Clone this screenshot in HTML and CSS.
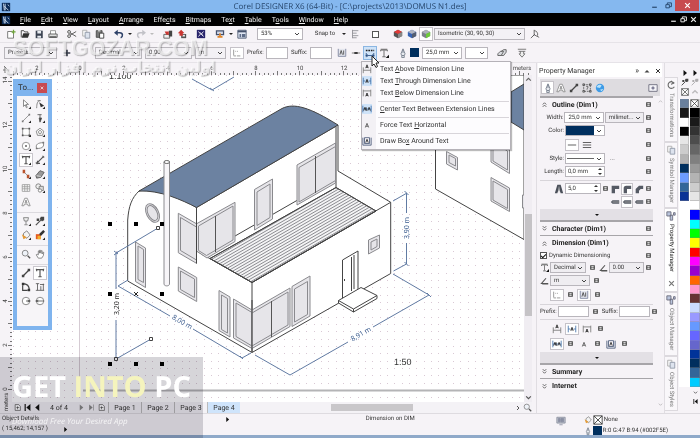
FILE: index.html
```html
<!DOCTYPE html>
<html lang="en">
<head>
<meta charset="utf-8">
<title>Corel DESIGNER X6</title>
<link rel="stylesheet" href="styles.css">
</head>
<body>
<svg class="defs" aria-hidden="true">
  <defs>
    <symbol id="logo" viewBox="0 0 12 12"><path d="M1 1h10v10H1z" fill="#0c2c58"/><path d="M3 2l1 8M5 2v8M4 5l5 5M8 3l2 2" stroke="#dce9fa" fill="none"/></symbol>
    <symbol id="new" viewBox="0 0 12 12"><path d="M2 3h5l2 2v6H2z" fill="#fff" stroke="#666"/><path d="M9 1v5M6.500 3.500h5" stroke="#6fa53a" stroke-width="1.500"/></symbol>
    <symbol id="open" viewBox="0 0 12 12"><path d="M1.500 10V2h3l1 1.500h4V5" fill="none" stroke="#333"/><path d="M2 10.500L4 5h7.500L9.500 10.500z" fill="#333"/></symbol>
    <symbol id="save" viewBox="0 0 12 12"><path d="M2 2h8.500v9H2z" fill="#3b4252"/><path d="M4 2.500h4.500v3H4zM4 8h4.500v2.500H4z" fill="#e9ecf2"/></symbol>
    <symbol id="print" viewBox="0 0 12 12"><path d="M3 6V2h6v4" fill="#fff" stroke="#888"/><path d="M1 6h10v4H1z" fill="#ddd" stroke="#555"/><path d="M2 9.500h8" stroke="#222"/></symbol>
    <symbol id="cut" viewBox="0 0 12 12"><path d="M1 3l10 6M1 9l10-6" stroke="#444"/><circle cx="2.500" cy="3.500" r="1.700" fill="#eee" stroke="#444"/><circle cx="2.500" cy="8.500" r="1.700" fill="#eee" stroke="#444"/></symbol>
    <symbol id="copy" viewBox="0 0 12 12"><path d="M2 1.500h5v7H2z" fill="#f5f5f5" stroke="#aaa"/><path d="M5 4h5.500v7H5z" fill="#dde3ee" stroke="#8c94a4"/></symbol>
    <symbol id="paste" viewBox="0 0 12 12"><path d="M1.500 2h7v8h-7z" fill="#777" stroke="#444"/><path d="M3.500 1h3v2h-3z" fill="#ccc"/><path d="M5.500 5h5v6h-5z" fill="#fff" stroke="#333"/></symbol>
    <symbol id="undo" viewBox="0 0 12 12"><path d="M3 4.500h4c4 0 4 5 1 6" fill="none" stroke="#2e4168" stroke-width="1.800"/><path d="M0 4.500L4.500 1v7z" fill="#2e4168"/></symbol>
    <symbol id="redo" viewBox="0 0 12 12"><path d="M9 4.500H5c-4 0-4 5-1 6" fill="none" stroke="#c2c2c8" stroke-width="1.800"/><path d="M12 4.500L7.500 1v7z" fill="#c2c2c8"/></symbol>
    <symbol id="import" viewBox="0 0 12 12"><path d="M1 6.500h7V11H1z" fill="#eee" stroke="#555"/><path d="M7 2h4v7H7z" fill="#444"/><path d="M2 3h5v4H4z" fill="#c93632"/></symbol>
    <symbol id="export" viewBox="0 0 12 12"><path d="M5 6h6v5H5z" fill="#555"/><path d="M6.500 7h3v2h-3z" fill="#eee"/><path d="M1 5l4-4 4 4H7v3H3V5z" fill="#c93632"/></symbol>
    <symbol id="launch" viewBox="0 0 12 12"><path d="M1 1h10v10H1z" fill="#28246c"/><path d="M3 3l2.500 3L3 9M9 3L6.500 6 9 9M5 4l3 4" stroke="#fff" fill="none"/></symbol>
    <symbol id="publish" viewBox="0 0 12 12"><path d="M1 1.500h10v6H1z" fill="#45516d"/><path d="M2.500 3h7v3h-7z" fill="#cfd8ea"/><path d="M6 5v4M3 9.500h6" stroke="#e0862a" stroke-width="2"/></symbol>
    <symbol id="dialog" viewBox="0 0 12 12"><path d="M1 1.500h10v9.500H1z" fill="#dfe6f2" stroke="#44506a"/><path d="M1 3h10" stroke="#44506a" stroke-width="2"/><path d="M3 6h2v4H3zM6 6h4v4H6z" fill="#5e6c88"/></symbol>
    <symbol id="align" viewBox="0 0 12 12"><path d="M3 1v10M3 2h7M3 5h5M3 8h7M3 10.500h5" stroke="#8a8a90" fill="none"/></symbol>
    <symbol id="cubeR" viewBox="0 0 12 12"><path d="M6 1l5 2.500v5L6 11 1 8.500v-5z" fill="#555"/><path d="M6 1l5 2.500L6 6 1 3.500z" fill="#e23a38"/><path d="M6 6v5l5-2.500v-5z" fill="#888"/></symbol>
    <symbol id="cubeB" viewBox="0 0 12 12"><path d="M6 1l5 2.500v5L6 11 1 8.500v-5z" fill="#3763b4"/><path d="M6 1l5 2.500L6 6 1 3.500z" fill="#b0b4c0"/><path d="M6 6v5l5-2.500v-5z" fill="#555e70"/></symbol>
    <symbol id="cubeG" viewBox="0 0 12 12"><path d="M6 1l5 2.500v5L6 11 1 8.500v-5z" fill="#7a808a"/><path d="M6 1l5 2.500L6 6 1 3.500z" fill="#aeb2ba"/><path d="M6 6v5l5-2.500v-5z" fill="#6dcb3a"/></symbol>
    <symbol id="axes" viewBox="0 0 12 12"><path d="M5 1v6l-4 4M5 7l6 3M5 2c3 0 5 3 4 6M3 9l3-3" fill="none" stroke="#555"/></symbol>
    <symbol id="plus" viewBox="0 0 12 12"><path d="M6 2v8M2 6h8" stroke="#3c4250" stroke-width="2"/></symbol>
    <symbol id="units" viewBox="0 0 12 12"><path d="M2 2v7M4 4h1M6 4h1M2 9.500h3M6 9.500h4" stroke="#888" fill="none"/></symbol>
    <symbol id="boxed" viewBox="0 0 12 12"><path d="M1.500 1v9h9V1" fill="#e4e6ee" stroke="#77809a"/><path d="M3.500 8L5 3l1.500 5M8 3v5" stroke="#444" fill="none"/></symbol>
    <symbol id="dash" viewBox="0 0 12 12"><path d="M1 6h10" stroke="#666"/><path d="M4 5h4v2H4z" fill="#222"/></symbol>
    <symbol id="textpos" viewBox="0 0 12 12"><path d="M1 3h10" stroke="#222" stroke-width="2" stroke-dasharray="2 1"/><path d="M1 9h10M1.500 6v5M10.500 6v5M3 7.500L1.500 9 3 10.500M9 7.500L10.500 9 9 10.500" fill="none" stroke="#264a7e"/></symbol>
    <symbol id="tee" viewBox="0 0 12 12"><path d="M2 1.500h8M2 4V2.500h8V4M6 3v7M4 10.500h4" fill="none" stroke="#555"/><path d="M12 8v4H8z" fill="#111"/></symbol>
    <symbol id="pen" viewBox="0 0 12 12"><path d="M6 1L3.500 7l1 2h3l1-2zM4.500 9v2.500h3V9M6 2v4" fill="#e8ebf0" stroke="#6c7684"/></symbol>
    <symbol id="layers" viewBox="0 0 12 12"><path d="M1 7l3-3h4L5 9H1zM5 4l3-2h3v3L8 9H5" fill="#d8dade" stroke="#555"/></symbol>
    <symbol id="down" viewBox="0 0 12 12"><path d="M1 1.500h10M2 4h8M4 4v3H2.500L6 11l3.500-4H8V4" fill="#eee" stroke="#666"/></symbol>
    <symbol id="above" viewBox="0 0 12 12"><path d="M1.500 4v7M10.500 4v7M1.500 7.500h9" stroke="#777" fill="none"/><path d="M4.500 5L6 1l1.500 4M5 4h2" fill="none" stroke="#222"/></symbol>
    <symbol id="through" viewBox="0 0 12 12"><path d="M1.500 2v8M10.500 2v8M1.500 6H4M8 6h2.500" stroke="#3f70a8" fill="none"/><path d="M4.500 8L6 4l1.500 4M5 7h2" fill="none" stroke="#222"/></symbol>
    <symbol id="below" viewBox="0 0 12 12"><path d="M1.500 2v8M10.500 2v8M1.500 3.500h9" stroke="#777" fill="none"/><path d="M4.500 10L6 6l1.500 4M5 9h2" fill="none" stroke="#222"/></symbol>
    <symbol id="center" viewBox="0 0 12 12"><path d="M1 2v8M11 2v8M1 6h10" stroke="#3f70a8" fill="none"/><path d="M2 8l1.500-4L5 8M5 4v4M7 8l1.500-4L10 8" fill="none" stroke="#222"/></symbol>
    <symbol id="letter" viewBox="0 0 12 12"><path d="M4 9l2-5 2 5M4.500 7.500h3" fill="none" stroke="#555"/></symbol>
    <symbol id="boxtext" viewBox="0 0 12 12"><path d="M1 2v9h10V2M3 2h6v7H3z" fill="#e5e7ee" stroke="#4c5a78"/><path d="M4.500 8L6 4l1.500 4" fill="none" stroke="#222"/></symbol>
    <symbol id="corner" viewBox="0 0 12 12"><path d="M12 9v3H9z" fill="#222"/></symbol>
    <symbol id="pick" viewBox="0 0 12 12"><path d="M3 1v8l2-2 1.500 3.500 1-.5L6 6.500h3z" fill="#fff" stroke="#777"/></symbol>
    <symbol id="shape" viewBox="0 0 12 12"><path d="M2 11c0-5 1-9 4-9M3 2h4" fill="none" stroke="#777"/><path d="M5 4l6 4-4 2z" fill="#333"/></symbol>
    <symbol id="line" viewBox="0 0 12 12"><path d="M2 10l8-8" stroke="#888"/><path d="M1 9h2v2H1zM9 1h2v2H9z" fill="#777"/></symbol>
    <symbol id="brush" viewBox="0 0 12 12"><path d="M3 2h5M6 2v5M5 6h3l-2 5z" fill="#333" stroke="#555"/></symbol>
    <symbol id="rect" viewBox="0 0 12 12"><path d="M2 2h8v8H2z" fill="#fff" stroke="#888"/><path d="M1 1h2v2H1zM9 1h2v2H9zM1 9h2v2H1zM9 9h2v2H9z" fill="#555"/></symbol>
    <symbol id="poly" viewBox="0 0 12 12"><path d="M6 1.500l4.500 3.500L9 10H3L1.500 5zM6 4l2 1.500L7 8H5L4 5.500z" fill="#fff" stroke="#777"/></symbol>
    <symbol id="circ" viewBox="0 0 12 12"><circle cx="6" cy="6" r="4.500" fill="#fff" stroke="#888"/><path d="M5 5h2v2H5z" fill="#444"/></symbol>
    <symbol id="curve" viewBox="0 0 12 12"><path d="M2 9c-2-5 2-7 8-7 1 4 0 7-8 7z" fill="#fff" stroke="#777"/><path d="M1 8h2v2H1zM9 1h2v2H9z" fill="#777"/></symbol>
    <symbol id="text" viewBox="0 0 12 12"><path d="M2 4V2h8v2M6 2v8.500M4 10.500h4" fill="none" stroke="#555" stroke-width="1.400"/><path d="M1 1h1v1H1zM10 1h1v1h-1z" fill="#444"/></symbol>
    <symbol id="dim" viewBox="0 0 12 12"><path d="M2 10l8-8M3 7v3h3M1 9l2 2M9 1l2 2" fill="none" stroke="#555" stroke-width="1.400"/></symbol>
    <symbol id="dumbbell" viewBox="0 0 12 12"><path d="M3 9l6-6" stroke="#444" stroke-width="1.500"/><path d="M1 8h3v3H1zM8 1h3v3H8z" fill="#444"/></symbol>
    <symbol id="connect" viewBox="0 0 12 12"><path d="M3 3l6 6" stroke="#888"/><path d="M2 1h3v4H2zM7 7h3v4H7z" fill="#b8532e"/></symbol>
    <symbol id="eraser" viewBox="0 0 12 12"><path d="M1 8l5-6 5 2-4 6-5 1z" fill="#999" stroke="#555"/><path d="M2 8l5 1" stroke="#ddd"/></symbol>
    <symbol id="table" viewBox="0 0 12 12"><path d="M1.500 2h9v8h-9zM1.500 4.500h9M1.500 7h9M4.500 2v8M7.500 2v8" fill="#fff" stroke="#999"/></symbol>
    <symbol id="smart" viewBox="0 0 12 12"><circle cx="4" cy="4" r="3" fill="#eee" stroke="#777"/><path d="M5 4h5v5H5z" fill="#ddd" stroke="#777"/><circle cx="6" cy="9" r="2" fill="#fff" stroke="#777"/></symbol>
    <symbol id="bigA" viewBox="0 0 12 12"><path d="M1 10.500L4.500 1.500h3l3.500 9H8.500L8 8.500H4l-.5 2zM6 3.500L4.800 7h2.400z" fill="#fff" stroke="#888"/></symbol>
    <symbol id="darkA" viewBox="0 0 12 12"><path d="M1 11L4 1h4l3 10H8L7 8H5l-1 3z" fill="#4b505a"/><path d="M5 10l1-8 1 8" fill="#ddd"/></symbol>
    <symbol id="glass" viewBox="0 0 12 12"><path d="M3 2h6L8 6H4zM6 6v4M4 10.500h4" fill="#eee" stroke="#777"/></symbol>
    <symbol id="drop" viewBox="0 0 12 12"><path d="M1 11l6-6M6 3l3 3" stroke="#555" stroke-width="1.500"/><path d="M7 1h4v4L9 6 6 3zM2 3h3v3H2z" fill="#444"/></symbol>
    <symbol id="fill" viewBox="0 0 12 12"><path d="M3 4l4-3 4 5-4 4-4-3z" fill="#f3f3f3" stroke="#777"/><path d="M1 5l6 4-4 2z" fill="#e59a34"/></symbol>
    <symbol id="ifill" viewBox="0 0 12 12"><path d="M1 5h6v6H1z" fill="#e45a22"/><path d="M3 7h4v4H3z" fill="#f2b02c"/><path d="M6 6l5-5" stroke="#333" stroke-width="3"/></symbol>
    <symbol id="zoom" viewBox="0 0 12 12"><circle cx="5" cy="5" r="3.500" fill="#eef2f8" stroke="#777"/><path d="M8 8l3 3" stroke="#555" stroke-width="1.600"/></symbol>
    <symbol id="hand" viewBox="0 0 12 12"><path d="M4 11L1.500 7l1-1L4 7V2.500l1-.5.500 3V1.500h1L7 5l.5-3h1V6l1-2h1L10 8l-2 3z" fill="#fff" stroke="#777"/></symbol>
    <symbol id="arc" viewBox="0 0 12 12"><path d="M2 2c5 0 8 3 8 8M2 4v6h6" fill="none" stroke="#444" stroke-width="1.400"/><path d="M1 1h3v3H1zM8 8h3v3H8z" fill="#333"/></symbol>
    <symbol id="ext" viewBox="0 0 12 12"><path d="M1 2h4M3 2v8M1 10h10M7 5v5M10 2v8M6 3h5" fill="none" stroke="#555"/></symbol>
    <symbol id="radius" viewBox="0 0 12 12"><circle cx="6" cy="6" r="4.500" fill="#fff" stroke="#777"/><path d="M6 6h5M8 5l3 1-3 1" fill="none" stroke="#555"/></symbol>
    <symbol id="diam" viewBox="0 0 12 12"><circle cx="6" cy="6" r="4.500" fill="#fff" stroke="#777"/><path d="M1 6h10M4 5L1 6l3 1" fill="none" stroke="#555"/></symbol>
    <symbol id="frame" viewBox="0 0 12 12"><path d="M2 2h8v8H2z" fill="none" stroke="#555" stroke-dasharray="2 1"/><path d="M5 4h2v2L6 7v1M1 1h2v2H1zM9 1h2v2H9zM1 9h2v2H1zM9 9h2v2H9z" fill="none" stroke="#555"/></symbol>
    <symbol id="globe" viewBox="0 0 12 12"><circle cx="6" cy="6" r="5" fill="#3e9be6"/><path d="M2 4c3-3 5-2 6-1L6 6 2 5zM6 8l4-1-2 3z" fill="#b9e3fb"/></symbol>
    <symbol id="screen" viewBox="0 0 12 12"><path d="M1 1.500h10v7H1z" fill="#b9bdc9" stroke="#8d91a0"/><path d="M3 3h2v4H3zM6 3h3v4H6zM4 10.500h4" fill="#8a8fa2" stroke="#8a8fa2"/></symbol>
    <symbol id="expand" viewBox="0 0 12 12"><path d="M1 2h10v8H1z" fill="#f4f4f8" stroke="#667"/><path d="M6 4v4M4 6h4" stroke="#446"/></symbol>
    <symbol id="single" viewBox="0 0 12 12"><path d="M1 6h10" stroke="#444"/></symbol>
    <symbol id="triple" viewBox="0 0 12 12"><path d="M1 3h10M1 6h10M1 9h10" stroke="#444"/></symbol>
    <symbol id="miter" viewBox="0 0 12 12"><path d="M2 2h9v4H6v5H2z" fill="#555a64"/></symbol>
    <symbol id="round" viewBox="0 0 12 12"><path d="M5 2h6v4H6v5H2V5c0-2 1-3 3-3z" fill="#555a64"/></symbol>
    <symbol id="bevel" viewBox="0 0 12 12"><path d="M6 2h5v4H8L6 8v3H2V6z" fill="#555a64"/></symbol>
    <symbol id="cap" viewBox="0 0 12 12"><path d="M3 4h8v4H3L1 6z" fill="#555a64"/><path d="M3 6h8" stroke="#aaa"/></symbol>
    <symbol id="sq" viewBox="0 0 12 12"><path d="M3 3h6v6H3z" fill="#fff" stroke="#444" stroke-width="2"/><path d="M3 6h6" stroke="#444"/></symbol>
    <symbol id="angle" viewBox="0 0 12 12"><path d="M11 10H2l6-7M3 10.500h8" fill="none" stroke="#555" stroke-width="1.500"/></symbol>
    <symbol id="obj" viewBox="0 0 12 12"><path d="M1 1h5v5H1zM5 5h3v6H5zM9 2h2v3H9z" fill="#b9c4dc" stroke="#667"/></symbol>
    <symbol id="rot" viewBox="0 0 12 12"><path d="M10 4a4 4 0 1 0 0 4M6 1l3 3-3 1" fill="none" stroke="#666" stroke-width="1.300"/></symbol>
    <symbol id="none" viewBox="0 0 12 12"><path d="M1 1h10v10H1zM1 1l10 10M11 1L1 11" fill="#fff" stroke="#333"/></symbol>
    <symbol id="chevs" viewBox="0 0 12 12"><path d="M3 2l3 3 3-3M3 6l3 3 3-3" fill="none" stroke="#555" stroke-width="1.500"/></symbol>
    <symbol id="vdown" viewBox="0 0 12 12"><path d="M2 4l4 4 4-4" fill="none" stroke="#555" stroke-width="2"/></symbol>
    <symbol id="vup" viewBox="0 0 12 12"><path d="M2 8l4-4 4 4" fill="none" stroke="#666" stroke-width="2"/></symbol>
    <symbol id="triup" viewBox="0 0 12 12"><path d="M1 9l5-5 5 5z" fill="#444"/></symbol>
    <symbol id="vright" viewBox="0 0 12 12"><path d="M4 2l4 4-4 4" fill="none" stroke="#555" stroke-width="2"/></symbol>
    <symbol id="tri" viewBox="0 0 12 12"><path d="M3 0l7 6-7 6z" fill="#111"/></symbol>
    <symbol id="trileft" viewBox="0 0 12 12"><path d="M9 0L2 6l7 6z" fill="#111"/></symbol>
    <symbol id="trigray" viewBox="0 0 12 12"><path d="M3 1l6 5-6 5z" fill="#888"/></symbol>
    <symbol id="first" viewBox="0 0 12 12"><path d="M1 0h2v12H1zM11 0L4 6l7 6z" fill="#111"/></symbol>
    <symbol id="last" viewBox="0 0 12 12"><path d="M9 1h1v10H9zM2 1l6 5-6 5z" fill="#888"/></symbol>
    <symbol id="page" viewBox="0 0 12 12"><path d="M2 1h6l3 3v7H2zM4 6h5M6 4v5" fill="#fff" stroke="#333"/></symbol>
    <symbol id="min" viewBox="0 0 12 12"><path d="M2 8h8v2H2z" fill="currentColor"/></symbol>
    <symbol id="restore" viewBox="0 0 12 12"><path d="M4 4V1.500h7V8H8M1.500 4.500h6V10h-6z" fill="none" stroke="currentColor" stroke-width="1.600"/></symbol>
    <symbol id="x" viewBox="0 0 12 12"><path d="M2 2l8 8M10 2l-8 8" stroke="currentColor" stroke-width="2"/></symbol>
    <pattern id="dots" x="79" y="82" width="22" height="22" patternUnits="userSpaceOnUse">
      <path d="M0 0h1v1H0zM7 0h1v1H7zM15 0h1v1h-1zM0 7h1v1H0zM7 7h1v1H7zM15 7h1v1h-1zM0 15h1v1H0zM7 15h1v1H7zM15 15h1v1h-1z" fill="#d9c8d4"/>
    </pattern>
    <pattern id="hticks" x="79" y="0" width="22" height="12" patternUnits="userSpaceOnUse"><path d="M0 8h1v4H0zM4 10h1v2H4zM9 10h1v2H9zM13 10h1v2h-1zM18 10h1v2h-1z" fill="#777"/></pattern>
    <pattern id="vticks" x="0" y="81" width="12" height="22" patternUnits="userSpaceOnUse"><path d="M8 0v1h4V0zM10 4v1h2V4zM10 9v1h2V9zM10 13v1h2v-1zM10 18v1h2v-1z" fill="#777"/></pattern>
    <pattern id="deck" x="0" y="0" width="4" height="3" patternUnits="userSpaceOnUse" patternTransform="skewY(-30)"><path d="M0 0h4v1H0z" fill="#8b8b90"/></pattern>
  </defs>
</svg>

<header class="titlebar">
  <svg class="i"><use href="#logo"/></svg>
  <h1>Corel DESIGNER X6 (64-Bit) - [C:\projects\2013\DOMUS N1.des]</h1>
  <div class="winbtns">
    <button aria-label="Minimize"><svg><use href="#min"/></svg></button>
    <button aria-label="Restore"><svg><use href="#restore"/></svg></button>
    <button class="close" aria-label="Close"><svg><use href="#x"/></svg></button>
  </div>
</header>

<nav class="menubar">
  <svg class="i"><use href="#logo"/></svg>
  <button><u>F</u>ile</button><button><u>E</u>dit</button><button><u>V</u>iew</button><button><u>L</u>ayout</button><button><u>A</u>rrange</button><button>Effe<u>c</u>ts</button><button><u>B</u>itmaps</button><button>Te<u>x</u>t</button><button><u>T</u>able</button><button>T<u>o</u>ols</button><button><u>W</u>indow</button><button><u>H</u>elp</button>
  <div class="docbtns">
    <button aria-label="Minimize document"><svg><use href="#min"/></svg></button>
    <button aria-label="Restore document"><svg><use href="#restore"/></svg></button>
    <button aria-label="Close document"><svg><use href="#x"/></svg></button>
  </div>
</nav>

<div class="toolbar standard">
  <div class="group"><button aria-label="New"><svg class="i"><use href="#new"/></svg></button><button aria-label="Open"><svg class="i"><use href="#open"/></svg></button><button aria-label="Save"><svg class="i"><use href="#save"/></svg></button><button aria-label="Print"><svg class="i"><use href="#print"/></svg></button></div>
  <div class="group"><button aria-label="Cut"><svg class="i"><use href="#cut"/></svg></button><button aria-label="Copy"><svg class="i"><use href="#copy"/></svg></button><button aria-label="Paste"><svg class="i"><use href="#paste"/></svg></button></div>
  <div class="group"><button aria-label="Undo"><svg class="i"><use href="#undo"/></svg></button><button class="caret" aria-label="Undo list"></button><button aria-label="Redo"><svg class="i"><use href="#redo"/></svg></button><button class="caret dim" aria-label="Redo list"></button></div>
  <div class="group"><button aria-label="Import"><svg class="i"><use href="#import"/></svg></button><button aria-label="Export"><svg class="i"><use href="#export"/></svg></button></div>
  <div class="group"><button aria-label="Application launcher"><svg class="i"><use href="#launch"/></svg></button></div>
  <div class="group"><button aria-label="Publish"><svg class="i"><use href="#publish"/></svg></button><button class="caret" aria-label="Publish list"></button><button aria-label="Welcome screen"><svg class="i"><use href="#dialog"/></svg></button></div>
  <select class="w-zoom" aria-label="Zoom level"><option>53%</option></select>
  <button class="snap">Snap to</button><button class="caret" aria-label="Snap list"></button>
  <button aria-label="Dynamic guides"><svg class="i"><use href="#align"/></svg></button>
  <input class="planebox" type="checkbox" aria-label="Projected axes">
  <div class="group"><button aria-label="Top plane"><svg class="i"><use href="#cubeR"/></svg></button><button aria-label="Front plane"><svg class="i"><use href="#cubeB"/></svg></button><button class="on" aria-label="Right plane"><svg class="i"><use href="#cubeG"/></svg></button></div>
  <select class="w-iso" aria-label="Projection"><option>Isometric (30, 90, 30)</option></select>
  <button class="axes" aria-label="Projected axes setup"><svg class="i"><use href="#axes"/></svg></button>
</div>

<div class="toolbar property">
  <select class="w-preset" aria-label="Presets"><option>Presets...</option></select>
  <button class="add" aria-label="Add preset"><svg class="i"><use href="#plus"/></svg></button>
  <select class="w-style" aria-label="Dimension style"><option>Decimal</option></select>
  <select class="w-style" aria-label="Precision"><option>0.00</option></select>
  <select class="w-unit" aria-label="Units"><option>m</option></select>
  <button class="framed" aria-label="Show units"><svg class="i"><use href="#units"/></svg></button>
  <label for="tp">Prefix:</label><input id="tp" type="text">
  <label for="ts">Suffix:</label><input id="ts" type="text">
  <div class="group dims"><button aria-label="Dynamic dimensioning"><svg class="i"><use href="#boxed"/></svg></button><button aria-label="Extension lines"><svg class="i"><use href="#dash"/></svg></button><button class="hot" aria-label="Text position" aria-expanded="true"><svg class="i"><use href="#textpos"/></svg></button><button aria-label="Text style"><svg class="i"><use href="#tee"/></svg></button></div>
  <button class="pen" aria-label="Outline pen"><svg class="i"><use href="#pen"/></svg></button>
  <button class="swatch" aria-label="Outline color"></button>
  <select class="w-width" aria-label="Outline width"><option>25,0 mm</option></select>
  <select class="w-line" aria-label="Line style"><option></option></select>
  <button class="wide" aria-label="To front"><svg class="i"><use href="#layers"/></svg></button>
  <button class="wide" aria-label="Quick customize"><svg class="i"><use href="#down"/></svg></button>
</div>

<main class="work">
  <section class="doc">
    <svg class="hruler" viewBox="0 0 532 12" preserveAspectRatio="xMinYMin slice">
      <rect x="12" y="0" width="520" height="12" fill="url(#hticks)"/>
      <path d="M3 7h5M5 4v6M4 3l4 4" stroke="#777" fill="none"/>
      <text x="37" y="7">2</text><text x="80" y="7">0</text><text x="124" y="7">2</text><text x="168" y="7">4</text><text x="212" y="7">6</text><text x="256" y="7">8</text><text x="300" y="7">10</text><text x="344" y="7">12</text><text x="522" y="7">meters</text>
    </svg>
    <svg class="vruler" viewBox="0 75 12 338" preserveAspectRatio="xMinYMin slice">
      <rect x="0" y="75" width="12" height="318" fill="url(#vticks)"/>
      <text transform="translate(7 80) rotate(-90)">14</text><text transform="translate(7 125) rotate(-90)">12</text><text transform="translate(7 169) rotate(-90)">10</text><text transform="translate(7 213) rotate(-90)">8</text><text transform="translate(7 257) rotate(-90)">6</text><text transform="translate(7 301) rotate(-90)">4</text><text transform="translate(7 345) rotate(-90)">2</text><text transform="translate(7 389) rotate(-90)">0</text><text transform="translate(8 402) rotate(-90)">meters</text>
    </svg>
    <div class="canvas">
      <svg class="drawing" viewBox="12 75 512 327" preserveAspectRatio="xMinYMin slice">
        <rect x="12" y="75" width="512" height="327" fill="#fff"/>
        <rect x="12" y="75" width="512" height="327" fill="url(#dots)"/>
        <path d="M79.500 75v315" stroke="#d5cbd3" fill="none"/>
        <path d="M83 390.500h441" stroke="#b4b4b6" stroke-width="2"/>
        <text class="scale" x="109" y="79">1:100</text>
        <path class="dimline" d="M192 79l20 11 22-13"/>
        <g class="edge">
          <path d="M435.500 75v114L524 239.500V75z" fill="#fff"/>
          <path d="M511 92l13-8v46l-13-8z" fill="#6c82a1"/>
          <g class="win"><path d="M446.500 151.500l11 6v12.500l-11-6z"/><path d="M449 155l6.500 3.500v7.500l-6.500-3.500z"/><path d="M491 140l18.500 10v23.500L491 162z"/><path d="M493 142l14.500 9v19L493 161z"/><path d="M491 177.500l18.500 10.500v23.500L491 201z"/><path d="M493 181l14.500 8.500v19L493 200z"/><path d="M522.500 195h4v13h-4z"/></g>
        </g>
        <g class="edge">
          <path d="M139 191c8-2 35 2 57.500 16.500L338 125v46l52.700 31.300v71.200L252 352.500 127.700 281V220c1-14 4-22 11.300-29z" fill="#fff"/>
          <path d="M210 258.500l126-71 40 23.500-124 71.500z" fill="#f4f4f5"/>
          <path d="M210 258.500l126-71 40 23.500-124 71.500z" fill="url(#deck)"/>
          <path d="M336 127v60.500M202 255l134-77M196.500 207.500V251L252 282.500l138.700-80.200M252 282.500v70" fill="none"/>
          <path d="M139 191L282 108.500c12-6 28-1 56 16.500L196.500 207.500C182 200 160 190 139 191z" fill="#6c82a1"/>
        </g>
        <g class="win">
          <path d="M178.300 213.300l18.200 10.500v39.500l-18.200-10.600z"/><path d="M180.500 217.500l16 9.500v33l-16-9.500z"/>
          <path d="M196.500 223.800L235 202.300v39.200L207 258l-10.500-7z"/><path d="M198.500 226L233 206v34l-26.500 15.500-8-5z"/><path d="M215.500 216v36" class="mull"/>
          <path d="M254.500 189.500l18-10.500v40l-18 11z"/><path d="M257 192l13-8v33.500l-13 8z"/>
          <path d="M297 165l38.500-22v40L297 205z"/><path d="M299 167.500l36.500-21v34L299 202z"/><path d="M315.500 156v37" class="mull"/>
          <path d="M135.500 242l10 6v39.500l-10-6z"/><path d="M138 246l5.500 3.500v33l-5.500-3z"/>
          <path d="M178.300 267l18.400 10.500v24L178.300 291z"/><path d="M180.500 271l14 8v18.500l-14-8z"/>
          <path d="M219 290.500l11 6.500v40l-11-6.500z"/><path d="M221.500 295l6 3.500V333l-6-3.500z"/>
          <path d="M233.500 299l18.500 11v38.500L233.500 338z"/><path d="M236 303l16 9.500V346l-16-9.500z"/>
          <path d="M252 310l38-22v38.500l-38 22z"/><path d="M252 313l36-21v33l-36 21z"/><path d="M271.500 301v36" class="mull"/>
          <path d="M292 286.500l18-10.500v40l-18 10.500z"/><path d="M294.500 289l13-7.500v33l-13 7.500z"/>
          <path d="M368.500 240l11-5v13l-11 6z"/><path d="M371 242l6-3v7.500l-6 3.500z"/>
          <ellipse cx="152.500" cy="213" rx="6" ry="10" transform="rotate(-27 152.500 213)"/><ellipse cx="152.500" cy="213" rx="4.500" ry="8" transform="rotate(-27 152.500 213)"/>
        </g>
        <g class="edge">
          <path d="M196.500 207.500v56M252 300v52" fill="none"/>
          <path d="M342.500 260l15.500-9v42l-15.500 8z" fill="#fff"/><path d="M351.500 257v34M354 255v34M344.500 279v2" fill="none"/>
          <path d="M338.500 300.500l22.500-13 16 8v3L353.500 312l-15-9z" fill="#fff"/><path d="M338.500 300.500l15 8.500 23.500-13.500M353.500 309v3" fill="none"/>
        </g>
        <path d="M164 162v122c0 2.500 5.500 2.500 5.500 0V162" fill="#f7f5f8" stroke="#8c8c90"/><ellipse cx="166.800" cy="162" rx="2.800" ry="1.500" fill="#fff" stroke="#666"/>
        <g class="dimline">
          <path d="M116 253v36M116 320v39M116 253l42-25M116 359l35-20M118 286l10-6M118 286l52 30M193 329l49 29 9-5M255 355l35 20 58-33M373 327l56-32-36-21M393 201l14-8M406.500 193v20M406.500 243v21l-13 7"/>
          <path d="M114 251l4 3M114 255l4-3M240 356l3 3M404.500 191l4 4M404.500 262l4 4M427 293l4 4M210 88l4 3"/>
        </g>
        <g class="dimtext"><text transform="translate(181 324) rotate(30)">8,00 m</text><text transform="translate(362 336) rotate(-30)">8,91 m</text><text transform="translate(409 228) rotate(-90)">3,90 m</text><text class="sel" transform="translate(119 304) rotate(-90)">3,20 m</text></g>
        <text class="scale" x="394" y="365">1:50</text>
        <path d="M108 222h4v4h-4zM134 222h4v4h-4zM160 222h4v4h-4zM108 292h4v4h-4zM160 292h4v4h-4zM108 362h4v4h-4zM134 362h4v4h-4zM160 362h4v4h-4z" fill="#000"/>
        <path d="M134 292l4 4M138 292l-4 4" stroke="#222"/>
        <path d="M156.500 226.500h3v3h-3zM149.500 337.500h3v3h-3zM114.500 357.500h3v3h-3z" fill="#fff" stroke="#444"/>
      </svg>

      <aside class="toolbox" aria-label="Toolbox">
        <header><span>To...</span><button aria-label="Close toolbox"><svg><use href="#x"/></svg></button></header>
        <div class="tools">
          <button aria-label="Pick"><svg class="i"><use href="#pick"/><use href="#corner"/></svg></button><button aria-label="Shape"><svg class="i"><use href="#shape"/><use href="#corner"/></svg></button>
          <button aria-label="Line"><svg class="i"><use href="#line"/><use href="#corner"/></svg></button><button aria-label="Brush"><svg class="i"><use href="#brush"/><use href="#corner"/></svg></button>
          <button aria-label="Rectangle"><svg class="i"><use href="#rect"/><use href="#corner"/></svg></button><button aria-label="Polygon"><svg class="i"><use href="#poly"/><use href="#corner"/></svg></button>
          <button aria-label="Ellipse"><svg class="i"><use href="#circ"/><use href="#corner"/></svg></button><button aria-label="Curve"><svg class="i"><use href="#curve"/><use href="#corner"/></svg></button>
          <button class="on" aria-label="Text"><svg class="i"><use href="#text"/><use href="#corner"/></svg></button><button aria-label="Callout"><svg class="i"><use href="#dim"/><use href="#corner"/></svg></button>
          <button aria-label="Connector"><svg class="i"><use href="#connect"/><use href="#corner"/></svg></button><button aria-label="Eraser"><svg class="i"><use href="#eraser"/><use href="#corner"/></svg></button>
          <button aria-label="Table"><svg class="i"><use href="#table"/></svg></button><button aria-label="Smart fill"><svg class="i"><use href="#smart"/><use href="#corner"/></svg></button>
          <button aria-label="Effects"><svg class="i"><use href="#bigA"/></svg></button>
        </div>
        <div class="tools">
          <button aria-label="Transparency"><svg class="i"><use href="#glass"/><use href="#corner"/></svg></button><button aria-label="Eyedropper"><svg class="i"><use href="#drop"/><use href="#corner"/></svg></button>
          <button aria-label="Fill"><svg class="i"><use href="#fill"/><use href="#corner"/></svg></button><button aria-label="Interactive fill"><svg class="i"><use href="#ifill"/><use href="#corner"/></svg></button>
        </div>
        <div class="tools">
          <button aria-label="Zoom"><svg class="i"><use href="#zoom"/></svg></button><button aria-label="Pan"><svg class="i"><use href="#hand"/></svg></button>
        </div>
        <div class="tools">
          <button aria-label="Parallel dimension"><svg class="i"><use href="#dumbbell"/></svg></button><button class="on" aria-label="Linear dimension"><svg class="i"><use href="#text"/></svg></button>
          <button aria-label="Angular dimension"><svg class="i"><use href="#arc"/></svg></button><button aria-label="Extension"><svg class="i"><use href="#ext"/></svg></button>
          <button aria-label="Radius"><svg class="i"><use href="#radius"/></svg></button><button aria-label="Diameter"><svg class="i"><use href="#diam"/></svg></button>
        </div>
      </aside>
    </div>
    <div class="vscroll"><svg><use href="#vup"/></svg><div class="track"><i></i></div><svg><use href="#vdown"/></svg></div>
    <div class="pages">
      <button aria-label="Insert page before"><svg><use href="#page"/></svg></button><button aria-label="First page"><svg><use href="#first"/></svg></button><button aria-label="Previous page"><svg><use href="#trileft"/></svg></button>
      <span>4 of 4</span>
      <button aria-label="Next page"><svg><use href="#trigray"/></svg></button><button aria-label="Last page"><svg><use href="#last"/></svg></button><button aria-label="Insert page after"><svg><use href="#page"/></svg></button>
      <div class="tabs"><button>Page 1</button><button>Page 2</button><button>Page 3</button><button class="current">Page 4</button></div>
      <div class="hscroll"><i></i></div>
      <svg><use href="#vright"/></svg><svg class="mag"><use href="#zoom"/></svg>
    </div>
  </section>

  <aside class="panel">
    <header><h2>Property Manager</h2><span>»</span><svg><use href="#triup"/></svg><svg><use href="#x"/></svg></header>
    <div class="cats"><button class="on" aria-label="Outline"><svg class="i"><use href="#pen"/></svg></button><button aria-label="Character"><svg class="i"><use href="#bigA"/></svg></button><button aria-label="Dimension"><svg class="i"><use href="#dumbbell"/></svg></button><button aria-label="Summary"><svg class="i"><use href="#frame"/></svg></button><button aria-label="Internet"><svg class="i"><use href="#globe"/></svg></button><button class="end" aria-label="Expand"><svg class="i"><use href="#expand"/></svg></button></div>
    <div class="sections">
      <div class="head"><svg class="s up"><use href="#chevs"/></svg><h3>Outline (Dim1)</h3><svg class="s"><use href="#sq"/></svg></div>
      <div class="row"><label for="pw">Width:</label><select id="pw" class="f40"><option>25,0 mm</option></select><select class="f40 grey" aria-label="Width units"><option>milimet...</option></select><svg class="s"><use href="#sq"/></svg></div>
      <div class="row"><label for="pc">Color:</label><select id="pc" class="f40 color"><option></option></select><svg class="s"><use href="#sq"/></svg></div>
      <div class="row tall"><span class="lab"></span><button class="on" aria-label="Single line"><svg class="i"><use href="#single"/></svg></button><button aria-label="Multiple lines"><svg class="i"><use href="#triple"/></svg></button><svg class="s"><use href="#sq"/></svg></div>
      <div class="row"><label for="pst">Style:</label><select id="pst" class="f40 stroke"><option></option></select><span class="more">...</span><svg class="s"><use href="#sq"/></svg></div>
      <div class="row"><label for="pl">Length:</label><span class="spin f40"><input id="pl" type="text" value="0,0 mm"></span><svg class="s"><use href="#sq"/></svg></div>
      <hr>
      <div class="row"><span class="lab"><svg class="i"><use href="#darkA"/></svg></span><span class="spin f36"><input type="text" aria-label="Miter limit" value="5,0"></span><span class="trio"><svg class="s"><use href="#sq"/></svg><button aria-label="Miter"><svg class="i"><use href="#miter"/></svg></button><button class="on" aria-label="Round"><svg class="i"><use href="#round"/></svg></button><button aria-label="Bevel"><svg class="i"><use href="#bevel"/></svg></button><svg class="s"><use href="#sq"/></svg></span></div>
      <div class="row"><span class="trio"><button aria-label="Butt cap"><svg class="i"><use href="#cap"/></svg></button><button class="on" aria-label="Round cap"><svg class="i"><use href="#cap"/></svg></button><button aria-label="Square cap"><svg class="i"><use href="#cap"/></svg></button><svg class="s"><use href="#sq"/></svg></span></div>
      <button class="bar" aria-label="More outline options"></button>
      <div class="head"><svg class="s"><use href="#chevs"/></svg><h3>Character (Dim1)</h3><svg class="s"><use href="#sq"/></svg></div>
      <div class="head"><svg class="s up"><use href="#chevs"/></svg><h3>Dimension (Dim1)</h3><svg class="s"><use href="#sq"/></svg></div>
      <div class="row short"><input id="dd" type="checkbox" checked><label for="dd">Dynamic Dimensioning</label><svg class="s"><use href="#sq"/></svg></div>
      <div class="row"><svg class="s lead"><use href="#tee"/></svg><select class="f40 grey" aria-label="Style"><option>Decimal</option></select><svg class="s mid"><use href="#sq"/></svg><svg class="s lead"><use href="#angle"/></svg><select class="f40 grey" aria-label="Precision"><option>0.00</option></select><svg class="s"><use href="#sq"/></svg></div>
      <div class="row"><svg class="s lead"><use href="#angle"/></svg><select class="f40 grey" aria-label="Units"><option>m</option></select><svg class="s mid"><use href="#sq"/></svg></div>
      <div class="row tall indent"><button class="on" aria-label="Show units"><svg class="i"><use href="#units"/></svg></button><svg class="s mid"><use href="#sq"/></svg><button class="on" aria-label="Leading zero"><svg class="i"><use href="#boxed"/></svg></button><svg class="s mid"><use href="#sq"/></svg></div>
      <hr>
      <div class="row short"><label for="pp">Prefix:</label><input id="pp" type="text"><svg class="s mid"><use href="#sq"/></svg><label for="ps">Suffix:</label><input id="ps" type="text"><svg class="s"><use href="#sq"/></svg></div>
      <hr>
      <div class="row tall indent"><button aria-label="Text above"><svg class="i"><use href="#above"/></svg></button><button class="on" aria-label="Text through"><svg class="i"><use href="#through"/></svg></button><button aria-label="Text below"><svg class="i"><use href="#below"/></svg></button><svg class="s mid"><use href="#sq"/></svg></div>
      <div class="row tall indent"><button class="on" aria-label="Center text"><svg class="i"><use href="#center"/></svg></button><svg class="s mid"><use href="#sq"/></svg><button aria-label="Horizontal text"><svg class="i"><use href="#letter"/></svg></button><svg class="s mid"><use href="#sq"/></svg><button aria-label="Box around text"><svg class="i"><use href="#boxtext"/></svg></button><svg class="s mid"><use href="#sq"/></svg></div>
      <button class="bar" aria-label="More dimension options"></button>
      <div class="head"><svg class="s"><use href="#chevs"/></svg><h3>Summary</h3></div>
      <div class="head"><svg class="s"><use href="#chevs"/></svg><h3>Internet</h3></div>
    </div>
    <div class="pscroll"><svg><use href="#vup"/></svg><svg><use href="#vdown"/></svg></div>
  </aside>

  <nav class="dock">
    <button><svg class="i"><use href="#rot"/></svg>Transformations</button>
    <button><svg class="i"><use href="#copy"/></svg>Symbol Manager</button>
    <button class="current"><svg class="i"><use href="#obj"/></svg>Property Manager<svg class="s x"><use href="#x"/></svg></button>
    <button><svg class="i"><use href="#obj"/></svg>Object Manager</button>
    <button><svg class="i"><use href="#copy"/></svg>Object Styles</button>
  </nav>

  <div class="palette">
    <div class="top"><svg><use href="#tri"/></svg><svg><use href="#drop"/></svg><svg><use href="#none"/></svg></div>
    <div class="cells"><b style="background:#6a809c"></b><b style="background:#181818"></b><b style="background:#fff"></b><b style="background:#000"></b><b style="background:#e6e6e6"></b><b style="background:#ccc"></b><b style="background:#b3b3b3"></b><b style="background:#002f5e"></b><b style="background:#6c9cff"></b><b style="background:#336699"></b><b style="background:#0b3396"></b></div>
    <div class="foot"></div>
  </div>
  <div class="palette second">
    <div class="top"><svg><use href="#tri"/></svg><svg class="faint"><use href="#drop"/></svg><svg class="faint"><use href="#vup"/></svg></div>
    <div class="cells"><b><svg><use href="#none"/></svg></b><b style="background:#000"></b><b style="background:#1a1a1a"></b><b style="background:#333"></b><b style="background:#4d4d4d"></b><b style="background:#666"></b><b style="background:#808080"></b><b style="background:#999"></b><b style="background:#b3b3b3"></b><b style="background:#ccc"></b><b style="background:#e6e6e6"></b><b style="background:#fff"></b><b style="background:#00f"></b><b style="background:#0ff"></b><b style="background:#0f0"></b><b style="background:#ff0"></b><b style="background:#f00"></b><b style="background:#f0f"></b><b style="background:#90c"></b><b style="background:#f60"></b><b style="background:#f9c"></b><b style="background:#633"></b><b style="background:#ccdcff"></b><b style="background:#99f"></b><b style="background:#69f"></b><b style="background:#66f"></b><b style="background:#66c"></b><b style="background:#039"></b><b style="background:#002f5e"></b><b style="background:#369"></b><b style="background:#0cf"></b></div>
    <div class="foot"><svg><use href="#vdown"/></svg><svg><use href="#first"/></svg></div>
  </div>
</main>

<footer class="status">
  <div class="details"><span>Object Details</span><span class="coords">( 15,462; 14,157 ) <svg><use href="#tri"/></svg></span></div>
  <div class="object"><svg><use href="#tri"/></svg><span>Dimension on DIM</span></div>
  <svg class="i proof"><use href="#screen"/></svg>
  <div class="inks">
    <div><svg class="i"><use href="#fill"/></svg><svg class="i"><use href="#none"/></svg><span>None</span></div>
    <div><svg class="i"><use href="#pen"/></svg><i class="ink"></i><span>R:0 G:47 B:94 (#002F5E)</span></div>
  </div>
</footer>

<div class="flyout" role="menu">
  <button role="menuitem"><svg class="i"><use href="#above"/></svg><span>Text <u>A</u>bove Dimension Line</span></button>
  <button role="menuitem" class="set"><svg class="i"><use href="#through"/></svg><span>Text <u>T</u>hrough Dimension Line</span></button>
  <button role="menuitem"><svg class="i"><use href="#below"/></svg><span>Text <u>B</u>elow Dimension Line</span></button>
  <hr>
  <button role="menuitem" class="set"><svg class="i"><use href="#center"/></svg><span><u>C</u>enter Text Between Extension Lines</span></button>
  <hr>
  <button role="menuitem"><svg class="i"><use href="#letter"/></svg><span>Force Text <u>H</u>orizontal</span></button>
  <hr>
  <button role="menuitem"><svg class="i"><use href="#boxtext"/></svg><span>Draw Bo<u>x</u> Around Text</span></button>
</div>
<svg class="cursor" viewBox="0 0 9 13"><path d="M1 1v10l2-2 2 3.500 1.500-1L5 8h3z" fill="#fff" stroke="#222"/></svg>

<div class="mark-top"><strong>SOFTGOZAR.COM</strong><em lang="fa" dir="rtl">اولین انتخاب نرم افزار ایران</em></div>
<div class="mark-shade"></div>
<div class="mark-bottom"><strong>GET <span>INTO</span> PC</strong><em>Download Free Your Desired App</em></div>
</body>
</html>
```

FILE: styles.css
```css
* { box-sizing: border-box; }
html, body { margin: 0; height: 100%; }
body {
  display: flex;
  flex-direction: column;
  position: relative;
  overflow: hidden;
  background: #f6f3f7;
  color: #333;
  font: 6px/10px Roboto, "Open Sans", sans-serif;
  text-rendering: geometricPrecision;
}
h1, h2, h3 { margin: 0; font-weight: 400; }
button, input, select { margin: 0; font: inherit; color: inherit; border-radius: 0; text-rendering: inherit; }
button { padding: 0; border: 0; background: none; white-space: nowrap; }
svg { display: block; flex: none; width: 7px; height: 7px; }
.defs { position: absolute; width: 0; height: 0; }
.i { width: 10px; height: 10px; }
.s { width: 7px; height: 7px; }
u { text-underline-offset: 1px; text-decoration-thickness: 1px; }

select {
  appearance: none;
  height: 12px;
  padding: 0 8px 0 3px;
  border: 1px solid #b9b6bc;
  background: #fff url("data:image/svg+xml,%3Csvg xmlns='http://www.w3.org/2000/svg' width='7' height='6'%3E%3Cpath d='M1 2l2 2 2-2' fill='none' stroke='%23444'/%3E%3C/svg%3E") no-repeat right 1px center;
}
input[type="text"] { height: 12px; width: 22px; padding: 0 2px; border: 1px solid #b9b6bc; background: #fff; }
input[type="checkbox"] { appearance: none; width: 7px; height: 7px; border: 1px solid #555; background: #fff; }

/* Title and menu */
.titlebar { display: flex; align-items: center; height: 13px; padding-left: 1px; background: #85b8ef; color: #26466c; }
.titlebar h1 { flex: 1; padding-left: 42px; text-align: center; font: 8px/12px "Open Sans", sans-serif; }
.winbtns { display: flex; height: 11px; align-self: flex-start; padding-right: 1px; }
.winbtns button { display: grid; place-items: center; width: 14px; }
.winbtns .close { width: 24px; background: #c84b4f; color: #fff; }
.menubar { display: flex; align-items: center; height: 13px; padding-left: 1px; background: #000; color: #eee; font-size: 7px; }
.menubar > button { margin-left: 10px; }
.menubar .i { margin-right: -1px; }
.docbtns { display: flex; gap: 3px; margin-left: auto; padding-right: 3px; }

/* Toolbars */
.toolbar { display: flex; align-items: center; padding-left: 4px; background: #f6f3f7; border-bottom: 1px solid #e6e3e8; }
.standard { height: 17px; }
.property { height: 20px; }
.group { display: flex; margin-right: 5px; }
.toolbar button { display: grid; place-items: center; flex: none; min-width: 14px; height: 14px; }
.toolbar .caret { min-width: 8px; }
.caret::after { content: ""; border: 2px solid transparent; border-top-color: #222; border-bottom: 0; }
.caret.dim::after { border-top-color: #bbb; }
.toolbar select, .toolbar input[type="text"] { flex: none; }
.toolbar .on { border: 1px solid #c5c2c8; background: #fff; }
.w-zoom { width: 46px; margin: 0 11px 0 3px; }
.toolbar .snap { width: 22px; margin-right: 4px; }
.standard .planebox { width: 7px; height: 7px; margin: 0 12px 0 10px; }
.standard .group:has(.on) { margin-right: 1px; }
.w-iso { width: 91px; background-color: #f3f1f5; }
.toolbar .axes { margin-left: 3px; }
.w-preset { width: 53px; }
.property .w-preset, .property .w-style, .property .w-unit { background-color: #f3f1f5; }
.toolbar .add { margin: 0 21px 0 3px; }
.w-style { width: 47px; margin-right: 3px; }
.w-unit { width: 31px; margin-right: 4px; }
.toolbar .framed { height: 12px; margin-right: 3px; border: 1px solid #c5c2c8; background: #fff; }
.property label { margin-right: 2px; width: 17px; }
.property input { margin-right: 3px; }
.dims { margin: 0 5px 0 0; }
.toolbar .hot { background: #cfe3f8; border: 1px solid #8bb6e2; }
.toolbar .swatch { min-width: 9px; height: 9px; margin: 0 3px 0 0; background: #002f5e; }
.w-width { width: 40px; margin-right: 3px; }
.w-line { width: 23px; margin-right: 4px; }
.toolbar .wide { min-width: 20px; }

/* Work area */
.work { flex: 1; min-height: 0; display: grid; grid-template-columns: minmax(0, 1fr) 129px 14px 11px 10px; grid-template-rows: minmax(0, 1fr); }
.doc {
  display: grid;
  min-height: 0;
  grid-template-columns: 12px minmax(0, 1fr) 8px;
  grid-template-rows: 12px minmax(0, 1fr) 11px;
  margin-right: 4px;
}
.hruler { grid-column: 1 / -1; width: 100%; height: 12px; }
.vruler { grid-row: 2 / 4; width: 12px; height: 100%; }
.hruler text, .vruler text { font-size: 6px; fill: #444; text-anchor: middle; }
.canvas { position: relative; min-height: 0; }
.drawing { width: 100%; height: 100%; }
.edge { stroke: #444; }
.win { fill: #e6e5e9; stroke: #8a8a8e; }
.mull { stroke: #555; }
.dimline { fill: none; stroke: #617ba3; }
.dimtext { fill: #34568a; font: 7px "Open Sans", sans-serif; text-anchor: middle; }
.dimtext .sel { fill: #222; }
.scale { font: 9px "Liberation Sans", sans-serif; fill: #333; }
.vscroll { display: flex; flex-direction: column; align-items: center; padding: 1px 0; background: #f0edf2; }
.track { flex: 1; display: grid; grid-template-rows: 42% 33% 1fr; }
.track i { grid-row: 2; width: 7px; background: #c5c3c6; }
.pages { grid-column: 2 / -1; display: flex; align-items: center; background: #f4f2f6; font-size: 7px; }
.pages > button { width: 10px; display: grid; place-items: center; }
.pages > span { width: 34px; text-align: center; }
.pages > svg { width: 6px; height: 6px; }
.pages > .mag { width: 9px; height: 9px; margin-left: 2px; }
.tabs { display: flex; margin-left: 2px; align-self: stretch; }
.tabs button { width: 33px; border-left: 1px solid #bbb; }
.tabs .current { background: #cfe4fb; }
.hscroll { flex: 1; height: 7px; }
.hscroll i { display: block; width: 30%; height: 7px; margin-left: 33%; background: #c9c7ca; }

/* Toolbox window */
.toolbox { position: absolute; left: 1px; top: 4px; width: 39px; padding: 0 4px 4px; background: #7fb4ee; font-size: 8px; }
.toolbox header { display: flex; align-items: center; justify-content: space-between; height: 17px; padding-left: 1px; }
.toolbox header button { display: grid; place-items: center; width: 10px; height: 10px; margin-right: 1px; background: #c84b50; color: #fff; }
.toolbox header svg { width: 4px; height: 4px; }
.tools { display: grid; grid-template-columns: repeat(2, 14px); grid-auto-rows: 14px; justify-content: center; padding: 1px 0 3px; background: #f7f5f8; border-bottom: 1px solid #dcdadf; }
.tools:last-child { border: 0; padding-bottom: 18px; }
.tools button { display: grid; place-items: center; }
.tools .on { background: #fff; border: 1px solid #c9c6cc; }

/* Property manager */
.panel { position: relative; min-width: 0; padding: 0 4px 0 3px; border: 1px solid #e0dde2; border-width: 0 1px; background: #f6f3f7; }
.panel header { display: flex; align-items: center; gap: 5px; height: 14px; margin: 0 -2px; background: #fff; padding: 2px 1px 0; }
.panel header h2 { flex: 1; font-size: 7px; }
.panel header span { font-size: 8px; }
.panel header svg { width: 6px; height: 6px; }
.cats { display: flex; align-items: center; height: 17px; margin-top: 2px; padding: 0 1px; background: #dedce0; }
.cats button { display: grid; place-items: center; width: 13px; height: 13px; }
.cats .end { margin-left: auto; }
.on { border: 1px solid #c5c2c8; background: #fff; }
.sections { margin-right: 7px; }
.head { display: flex; align-items: center; gap: 4px; height: 15px; padding: 0 1px; border-top: 2px solid #a7a5a9; }
.head + .head { border-top-width: 1px; }
.head h3 { flex: 1; font-weight: 700; font-size: 7px; color: #222; }
.up { transform: scaleY(-1); }
.row { display: flex; align-items: center; height: 13px; gap: 1px; padding-right: 1px; }
.row.tall { height: 15px; }
.row.short { height: 11px; }
.row > .s:last-child { margin-left: auto; }
.row > .mid, .row > .mid:last-child { margin: 0 2px; }
.row > label:first-child, .lab { width: 24px; text-align: right; }
.row > input + label { margin-left: 1px; }
.lab .i { margin-left: auto; }
.row select, .row input[type="text"] { height: 11px; }
.row button { display: grid; place-items: center; width: 14px; height: 12px; }
.f40 { width: 40px; }
.f36 { width: 36px; }
.grey { background-color: #efedf1; }
.color { box-shadow: inset 28px 0 0 #002f5e; }
.stroke { background-image: linear-gradient(#666, #666), url("data:image/svg+xml,%3Csvg xmlns='http://www.w3.org/2000/svg' width='7' height='6'%3E%3Cpath d='M1 2l2 2 2-2' fill='none' stroke='%23444'/%3E%3C/svg%3E"); background-size: 27px 1px, 7px 6px; background-position: 1px center, right 1px center; }
.more { margin-left: 4px; }
.spin { position: relative; display: flex; }
.spin input[type="text"] { width: 100%; }
.spin::after, .spin::before { content: ""; position: absolute; right: 3px; border: 2px solid transparent; }
.spin::before { top: 2px; border-bottom-color: #333; border-top: 0; }
.spin::after { bottom: 2px; border-top-color: #333; border-bottom: 0; }
.trio { display: flex; align-items: center; margin-left: auto; }
.trio button { width: 12px; }
hr { margin: 0; border: 0; border-top: 1px solid #d8d5da; }
.sections hr { margin: 2px 0 1px; }
.bar { display: grid; place-items: center; width: 100%; height: 11px; margin-top: 1px; background: #e3e0e5; }
.bar::after { content: ""; border: 2px solid transparent; border-top-color: #111; border-bottom: 0; }
#dd { display: grid; place-items: center; }
#dd::before { content: ""; width: 4px; height: 2px; border: solid #111; border-width: 0 0 1px 1px; transform: rotate(-45deg); }
.row > .lead { width: 9px; height: 9px; }
.indent { padding-left: 10px; }
.row.short > label { width: 18px; text-align: left; }
.row.short > #dd + label { width: auto; }
.row.short input[type="text"] { width: 31px; }
.pscroll { position: absolute; right: 1px; top: 36px; bottom: 6px; display: flex; flex-direction: column; justify-content: space-between; opacity: .4; }
.pscroll svg { width: 5px; height: 5px; }

/* Docker tabs */
.dock { padding-top: 14px; }
.dock button { display: flex; align-items: center; width: 13px; gap: 3px; padding: 2px 0 4px; writing-mode: vertical-rl; border: 1px solid #dcd9de; border-left: 0; background: #f9f7fa; color: #777; font-size: 6px; line-height: 11px; }
.dock .current { background: #fff; color: #222; }
.dock .x { margin-top: 5px; color: #777; }

/* Colour palettes */
.palette { display: flex; flex-direction: column; background: #fff; }
.palette .top, .palette .foot { display: flex; flex: none; flex-direction: column; align-items: center; height: 36px; gap: 2px; padding-top: 7px; background: #f6f3f7; }
.palette .top svg { width: 8px; height: 8px; }
.palette .top svg:first-child { width: 6px; height: 6px; }
.palette .foot { height: 26px; padding-top: 3px; gap: 4px; }
.palette .foot svg { width: 5px; height: 5px; }
.cells { flex: 1; min-height: 0; display: grid; grid-template-rows: repeat(31, minmax(0, 1fr)); padding: 0 1px; }
.second .cells { padding: 0; }
.cells b { border: 1px solid #88888860; border-width: 0 1px 1px 0; overflow: hidden; }
.cells b svg { width: 9px; height: 9px; }
.faint { opacity: .4; }

/* Status bar */
.status { display: flex; height: 25px; padding: 0 2px; border-top: 1px solid #dedbe0; border-bottom: 3px solid #8fa9c9; }
.details { display: flex; flex-direction: column; width: 32%; }
.coords { display: flex; gap: 15px; align-items: center; }
.status .details svg, .object svg { width: 5px; height: 5px; }
.object { display: flex; gap: 136px; width: 48%; }
.object svg { margin-top: 3px; }
.proof { margin: 2px 18px 0 -3px; }
.inks div { display: flex; align-items: center; gap: 1px; height: 11px; }
.inks .i:first-child { width: 8px; }
.ink { width: 9px; height: 9px; background: #002f5e; }

/* Text position menu */
.flyout { position: absolute; left: 361px; top: 61px; width: 150px; padding: 1px 0 2px; border: 1px solid #b5b2b8; background: linear-gradient(90deg, #f3f1f5 14px, #fdfcfe 14px); box-shadow: 1px 1px 1px #0004; font-size: 7px; }
.flyout button { display: flex; align-items: center; gap: 8px; width: 100%; height: 12px; text-align: left; }
.flyout .set .i { background: #cfe3f8; }
.flyout hr { margin: 2px 1px 1px 16px; }
.cursor { position: absolute; left: 371px; top: 55px; width: 9px; height: 13px; }

/* Watermarks */
.mark-top, .mark-bottom, .mark-shade { position: absolute; pointer-events: none; white-space: nowrap; }
.mark-top, .mark-bottom { display: flex; flex-direction: column; }
.mark-top { left: 12px; top: 38px; width: 196px; align-items: center; color: #ffffffa0; text-shadow: 1px 1px 1px #0004; }
.mark-top strong { font: 700 22px/20px "Liberation Sans", sans-serif; }
.mark-top em { font: 700 15px/18px "DejaVu Sans", sans-serif; }
.mark-shade, .mark-bottom { left: 0; bottom: 0; width: 203px; height: 81px; }
.mark-shade { background: #d6d5d9; mix-blend-mode: multiply; }
.mark-bottom { padding: 15px 12px 0; color: #fff; }
.mark-bottom strong { font: 700 29px/30px "Open Sans", sans-serif; }
.mark-bottom strong span { color: #f5f4bd; }
.mark-bottom em { margin-top: 15px; font: italic 8px/10px "Open Sans", sans-serif; opacity: .8; }
```
